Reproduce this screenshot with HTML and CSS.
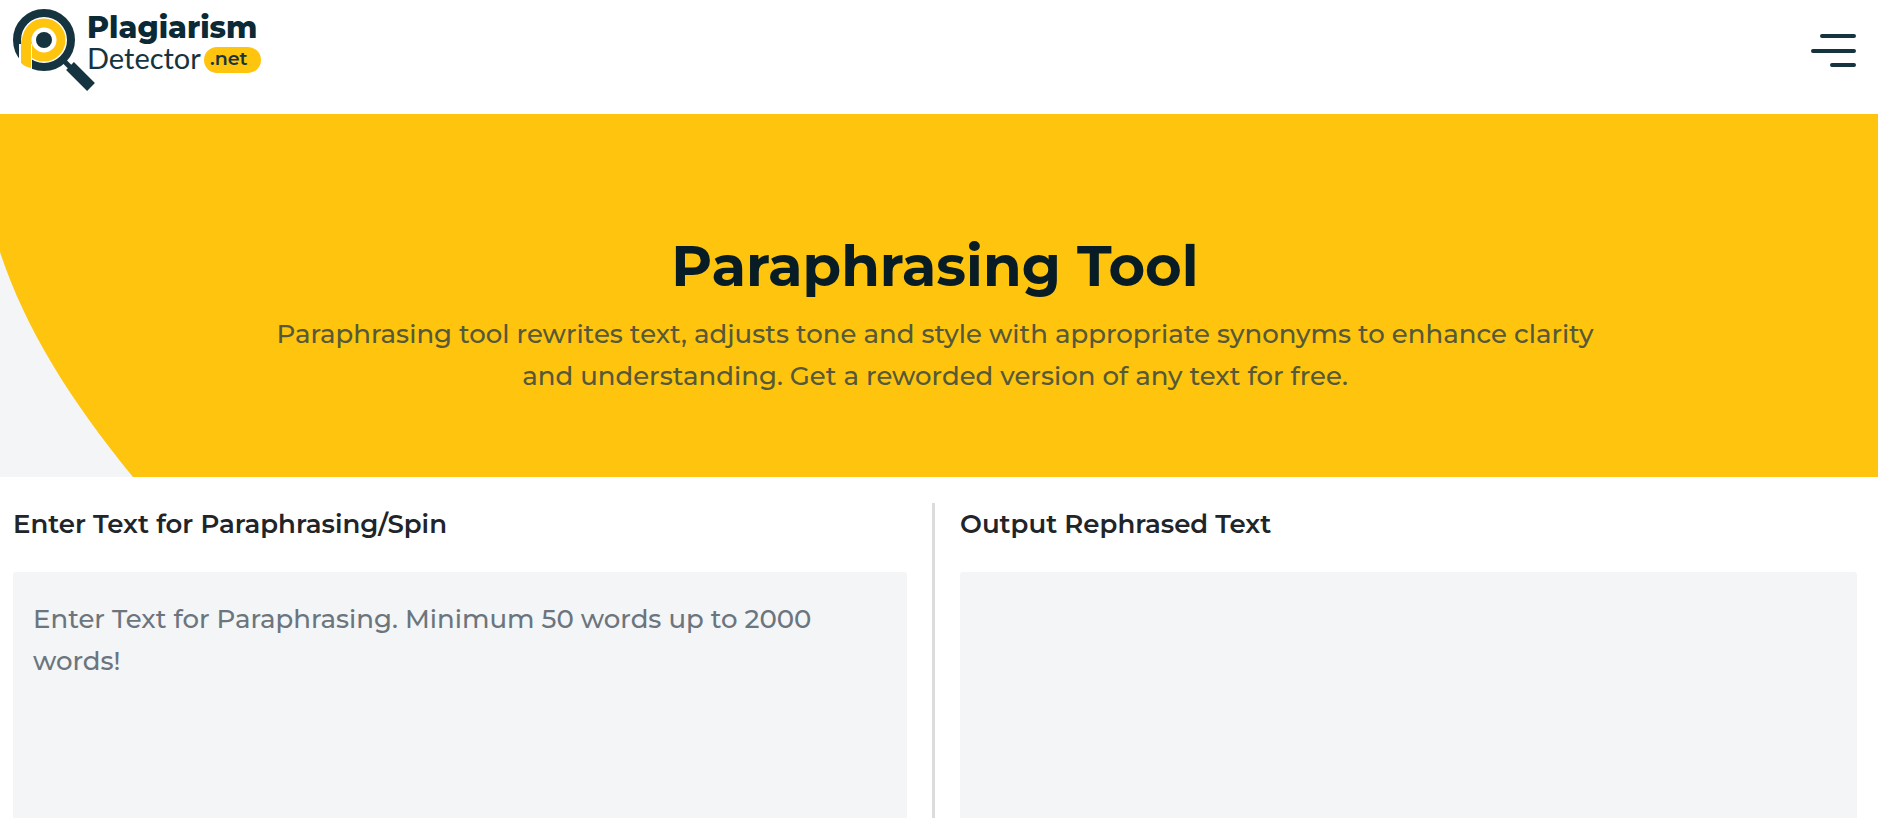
FILE: index.html
```html
<!DOCTYPE html>
<html lang="en">
<head>
	<meta charset="UTF-8">
	<meta name="viewport" content="width=device-width, initial-scale=1">
	<title>Paraphrasing Tool</title>
	<link rel="stylesheet" href="styles.css">
</head>
<body>
	<header class="header">
		<a class="logo" href="#" aria-label="Plagiarism Detector .net">
			<svg width="260" height="84" viewBox="0 0 260 84">
				<!-- magnifier -->
				<path d="M50 52l8 8" stroke="#15343f" stroke-width="5"/>
				<path d="M57 58l21 21" stroke="#15343f" stroke-width="11"/>
				<circle cx="31" cy="32" r="27" fill="#fff" stroke="#15343f" stroke-width="8"/>
				<!-- letter p -->
				<circle cx="31" cy="32" r="17" fill="none" stroke="#ffc40d" stroke-width="9"/>
				<path d="M6 36h13v28L6 58z" fill="#fff"/>
				<path d="M8 37Q8 32 10 27h8v33q-6 -1 -10 -5z" fill="#ffc40d"/>
				<circle cx="31" cy="32" r="8" fill="#15343f"/>
				<text class="logo-name" x="74" y="30">Plagiarism</text>
				<text class="logo-sub" x="74" y="61">Detector</text>
				<rect x="191" y="39" width="57" height="26" rx="13" fill="#ffc40d"/>
				<text class="logo-net" x="197" y="57">.net</text>
			</svg>
		</a>
		<button class="menu" type="button" aria-label="Menu">
			<svg width="46" height="36" viewBox="0 0 46 36">
				<path d="M11 3h32M2 18h41M21 32h22" stroke="#15343f" stroke-width="4" stroke-linecap="round"/>
			</svg>
		</button>
	</header>

	<section class="hero">
		<svg class="curve" width="133" height="225" viewBox="0 0 133 225">
			<path d="M0 0C25 76 70 148 133 225H0z" fill="#f3f5f7"/>
		</svg>
		<h1>Paraphrasing Tool</h1>
		<p>Paraphrasing tool rewrites text, adjusts tone and style with appropriate synonyms to enhance clarity and understanding. Get a reworded version of any text for free.</p>
	</section>

	<main class="tool">
		<div class="col col-input">
			<label for="input">Enter Text for Paraphrasing/Spin</label>
			<textarea id="input" placeholder="Enter Text for Paraphrasing. Minimum 50 words up to 2000 words!"></textarea>
		</div>
		<div class="col col-output">
			<label for="output">Output Rephrased Text</label>
			<textarea id="output" readonly></textarea>
		</div>
	</main>
</body>
</html>
```
FILE: styles.css
```css
*{box-sizing: border-box;margin: 0;padding: 0;}
body{display: flex;flex-direction: column;min-height: 100vh;background: #fff;color: #212529;font-family: Montserrat, Inter, sans-serif;font-size: 26px;font-weight: 500;line-height: 42px;}

.header{display: flex;justify-content: space-between;align-items: flex-start;height: 114px;padding: 8px 21px 0 13px;}
.logo svg,.menu svg{display: block;}
.logo-name{font: 800 30px Montserrat, Lato, sans-serif;fill: #0b2a35;}
.logo-sub{font: 400 29px Lato, sans-serif;fill: #15343f;}
.logo-net{font: 600 19px Montserrat, Inter, sans-serif;fill: #15343f;}
.menu{margin-top: 25px;border: 0;background: none;cursor: pointer;}

.hero{position: relative;padding: 118px 21px 80px 13px;background: #ffc40d;text-align: center;}
.hero h1{font-size: 56px;font-weight: 700;line-height: 68px;color: #071c24;}
.hero p{max-width: 1360px;margin: 13px auto 0;color: #55593a;}
.curve{position: absolute;left: 0;bottom: 0;}

.tool{display: flex;flex: 1;padding: 26px 21px 0 13px;}
.col{display: flex;flex-direction: column;width: 50%;}
.col-input{padding-right: 25px;border-right: 3px solid #dcdcdc;}
.col-output{padding-left: 25px;}
.col label{font-weight: 600;margin-bottom: 27px;}
.col textarea{flex: 1;width: 100%;padding: 26px 20px;border: 0;border-radius: 3px 3px 0 0;outline: 0;resize: none;background: #f3f5f7;font: inherit;color: #212529;}
.col textarea::placeholder{color: #6c757d;opacity: 1;}
```
